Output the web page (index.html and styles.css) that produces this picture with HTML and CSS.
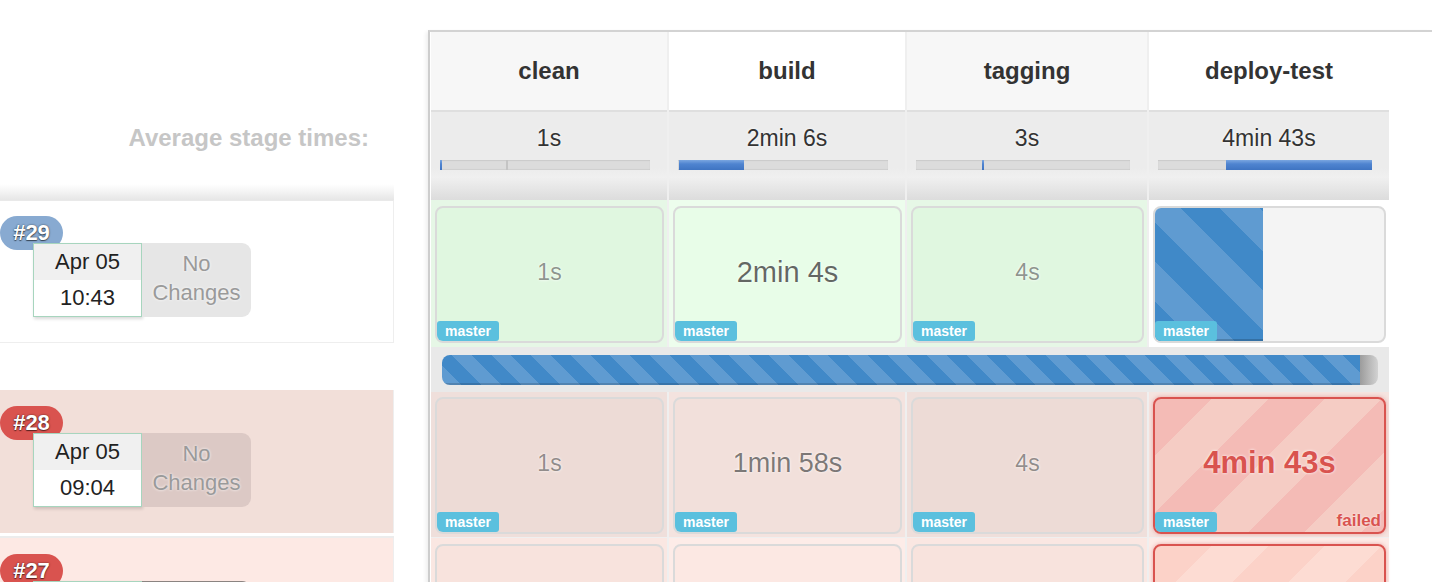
FILE: index.html
```html
<!DOCTYPE html>
<html lang="en">
<head>
<meta charset="utf-8">
<title>Stage View</title>
<link rel="stylesheet" href="styles.css">
</head>
<body>
<div class="page">
  <aside class="builds">
    <div class="builds-head"><span class="avg-label">Average stage times:</span></div>

    <div class="build-row row-29">
      <div class="build-badge badge-running">#29</div>
      <div class="build-meta">
        <div class="date-box"><div class="date">Apr 05</div><div class="time">10:43</div></div>
        <div class="changes">No<br>Changes</div>
      </div>
    </div>
    <div class="build-gap"></div>

    <div class="build-row row-28">
      <div class="build-badge badge-failed">#28</div>
      <div class="build-meta">
        <div class="date-box"><div class="date">Apr 05</div><div class="time">09:04</div></div>
        <div class="changes">No<br>Changes</div>
      </div>
    </div>
    <div class="build-gap small"></div>

    <div class="build-row row-27">
      <div class="build-badge badge-failed">#27</div>
      <div class="build-meta">
        <div class="date-box"><div class="date"></div><div class="time"></div></div>
        <div class="changes dark"></div>
      </div>
    </div>
  </aside>

  <main class="stages">
    <div class="stage-grid">
      <div class="head odd">clean</div>
      <div class="head">build</div>
      <div class="head odd">tagging</div>
      <div class="head">deploy-test</div>

      <div class="avg">
        <div class="avg-time">1s</div>
        <div class="track"><div class="fill" style="width:2px"></div><div class="tick" style="margin-left:64px"></div></div>
      </div>
      <div class="avg">
        <div class="avg-time">2min 6s</div>
        <div class="track"><div class="fill" style="margin-left:1px;width:65px"></div></div>
      </div>
      <div class="avg">
        <div class="avg-time">3s</div>
        <div class="track"><div class="fill" style="margin-left:66px;width:2px"></div></div>
      </div>
      <div class="avg">
        <div class="avg-time">4min 43s</div>
        <div class="track"><div class="fill" style="margin-left:68px;width:146px"></div></div>
      </div>

      <div class="cell r29 green-a"><div class="card"><span class="dur">1s</span><span class="branch">master</span></div></div>
      <div class="cell r29 green-b"><div class="card"><span class="dur big">2min 4s</span><span class="branch">master</span></div></div>
      <div class="cell r29 green-a"><div class="card"><span class="dur">4s</span><span class="branch">master</span></div></div>
      <div class="cell r29 white"><div class="card running"><div class="run-fill" style="width:108px"></div><span class="branch">master</span></div></div>

      <div class="progress-row">
        <div class="bar"><div class="bar-fill" style="width:918px"></div><div class="bar-rest"></div></div>
      </div>

      <div class="cell r28 red-a"><div class="card"><span class="dur">1s</span><span class="branch">master</span></div></div>
      <div class="cell r28 red-b"><div class="card"><span class="dur mid">1min 58s</span><span class="branch">master</span></div></div>
      <div class="cell r28 red-a"><div class="card"><span class="dur">4s</span><span class="branch">master</span></div></div>
      <div class="cell r28 red-d"><div class="card failed"><span class="dur fail">4min 43s</span><span class="branch">master</span><span class="failed-label">failed</span></div></div>

      <div class="cell r27 pink-a"><div class="card"></div></div>
      <div class="cell r27 pink-b"><div class="card"></div></div>
      <div class="cell r27 pink-a"><div class="card"></div></div>
      <div class="cell r27 pink-d"><div class="card failed light"></div></div>
    </div>
  </main>
</div>
</body>
</html>
```

FILE: styles.css
```css
* { box-sizing: border-box; margin: 0; padding: 0; }
html, body { background: #fff; }
body {
  font-family: "Liberation Sans", Arial, Helvetica, sans-serif;
  color: #333;
  width: 1432px;
  height: 582px;
  overflow: hidden;
}
.page { display: flex; align-items: flex-start; }

/* ---------- left: builds column ---------- */
.builds { width: 394px; flex: none; }
.builds-head {
  height: 200px;
  display: flex;
  justify-content: flex-end;
  align-items: flex-start;
  padding: 124px 25px 0 0;
  background: linear-gradient(to bottom, #fff 0, #fff 184px, #f3f3f3 192px, #e6e6e6 200px);
}
.avg-label {
  font-size: 24px;
  line-height: 28px;
  font-weight: bold;
  color: #c6c6c6;
}
.build-row {
  height: 143px;
  padding-top: 15px;
  border-right: 1px solid #eee;
}
.row-29 { background: #fff; border-top: 1px solid #e9e9e9; border-bottom: 1px solid #eee; }
.row-28 { background: #f2dfd9; padding-top: 16px; }
.row-27 { background: #fde9e4; padding-top: 16px; height: 120px; }
.build-gap { height: 47px; }
.build-gap.small { height: 5px; border-bottom: 2px solid #ececec; }

.build-badge {
  width: 63px;
  height: 34px;
  border-radius: 17px;
  color: #fff;
  font-size: 22px;
  font-weight: bold;
  line-height: 34px;
  text-align: center;
  text-shadow: 0 0 2px rgba(0,0,0,.6), 0 1px 1px rgba(0,0,0,.5);
}
.badge-running { background: #88aad1; }
.badge-failed { background: #d9534f; }

.build-meta {
  display: flex;
  margin: -7px 0 0 33px;
  position: relative;
}
.date-box {
  width: 109px;
  border: 1px solid #a7d5be;
  background: #fff;
  box-shadow: 1px 2px 3px rgba(0,0,0,.15);
  text-align: center;
  font-size: 22px;
  color: #222;
}
.date { height: 36px; line-height: 36px; background: #f0f0f0; }
.time { height: 36px; line-height: 36px; background: #fff; }
.changes {
  width: 109px;
  height: 74px;
  padding-top: 6px;
  border-radius: 0 9px 9px 0;
  background: #e6e6e6;
  color: #9a9a9a;
  font-size: 22px;
  line-height: 29px;
  text-align: center;
  text-shadow: 0 0 3px #fff;
}
.row-28 .changes { background: #dcc9c5; }
.changes.dark { background: #8b8481; }

/* ---------- right: stage grid ---------- */
.stages {
  flex: none;
  width: 1004px;
  height: 560px;
  margin: 30px 0 0 34px;
  border-top: 2px solid #d3d3d3;
  border-left: 2px solid #cdcdcd;
  box-shadow: -2px 2px 4px rgba(0,0,0,.07);
  overflow: hidden;
}
.stage-grid {
  display: grid;
  grid-template-columns: 236px 236px 240px 240px;
  column-gap: 2px;
  width: 958px;
  margin-left: 1px;
  background: #efefef;
}
.head {
  height: 78px;
  display: flex;
  align-items: center;
  justify-content: center;
  background: #fff;
  font-size: 24px;
  font-weight: bold;
  color: #333;
}
.head.odd { background: #f7f7f7; }

.avg {
  height: 90px;
  border-top: 2px solid #dfdfdf;
  background: linear-gradient(to bottom, #ececec 0, #ececec 64%, #f0f0f0 74%, #dcdcdc 100%);
}
.avg-time {
  margin-top: 12px;
  text-align: center;
  font-size: 23px;
  line-height: 28px;
  color: #333;
  text-shadow: 0 0 3px #fff;
}
.track {
  display: flex;
  height: 10px;
  margin: 8px 17px 0 9px;
  background: #dcdcdc;
  box-shadow: inset 0 1px 1px rgba(0,0,0,.08), inset 0 -1px 1px rgba(0,0,0,.06);
}
.fill {
  height: 100%;
  background: linear-gradient(to bottom, #7aa6e0 0, #4f84d0 40%, #3f74c2 100%);
}
.tick { width: 2px; height: 100%; background: #c4c4c4; }

.cell { padding: 5px 3px 3px 4px; }
.cell.r29 { padding-top: 6px; padding-bottom: 4px; }
.cell.r27 { margin-top: 1px; padding-top: 6px; }
.green-a { background: #e6f7e6; }
.green-a .card { background: #e0f7e0; }
.green-b { background: #edfded; }
.green-b .card { background: #e8fde8; }
.white { background: #fff; }
.red-a { background: #efdfdb; }
.red-a .card { background: #eddbd6; }
.red-b { background: #f4e3df; }
.red-b .card { background: #f2e0db; }
.red-d { background: #f5e4e0; }
.pink-a { background: #fae7e2; }
.pink-a .card { background: #f8e3dd; }
.pink-b { background: #fdece8; }
.pink-b .card { background: #fce8e3; }
.pink-d { background: #fdebe7; }

.card {
  position: relative;
  height: 137px;
  padding-bottom: 5px;
  display: flex;
  align-items: center;
  justify-content: center;
  border: 2px solid #dadada;
  border-radius: 8px;
  overflow: hidden;
}
.dur {
  font-size: 23px;
  color: rgba(0,0,0,.42);
  text-shadow: 0 0 3px #fff;
}
.dur.big { font-size: 29px; color: rgba(0,0,0,.6); }
.dur.mid { font-size: 27px; color: rgba(0,0,0,.52); }
.dur.fail { font-size: 31px; font-weight: bold; color: #d9534f; text-shadow: 0 0 3px #fff; }

.branch {
  position: absolute;
  left: 0;
  bottom: 0;
  padding: 0 8px;
  height: 20px;
  line-height: 20px;
  border-radius: 3px;
  background: #5bc0de;
  color: #fff;
  font-size: 14px;
  font-weight: bold;
}
.card.running {
  justify-content: flex-start;
  align-items: stretch;
  padding: 0;
  background: #f4f4f4;
}
.run-fill {
  height: 100%;
  background: repeating-linear-gradient(45deg, #4089c8 0, #4089c8 28px, #5f9bd1 28px, #5f9bd1 56px);
  box-shadow: inset 0 -2px 0 rgba(0,0,0,.18);
}
.card.failed {
  border-color: #d9534f;
  background: repeating-linear-gradient(135deg, #f4bbb6 0, #f4bbb6 40px, #f5ccc4 40px, #f5ccc4 80px);
  box-shadow: 0 0 4px rgba(217,83,79,.45);
}
.card.failed.light {
  background: repeating-linear-gradient(135deg, #fcd2c8 0, #fcd2c8 40px, #fddcd3 40px, #fddcd3 80px);
}
.failed-label {
  position: absolute;
  right: 3px;
  bottom: 1px;
  font-size: 17px;
  font-weight: bold;
  color: #d9534f;
  text-shadow: 0 0 2px #fff;
}

.progress-row {
  grid-column: 1 / -1;
  height: 45px;
  padding: 8px 11px 7px 11px;
  background: #e9e9e9;
}
.bar {
  display: flex;
  height: 30px;
  border-radius: 8px;
  overflow: hidden;
}
.bar-fill {
  height: 100%;
  background: repeating-linear-gradient(45deg, #5f9bd1 0, #5f9bd1 14px, #4189c8 14px, #4189c8 28px);
  box-shadow: inset 0 -2px 0 rgba(0,0,0,.15);
}
.bar-rest {
  flex: 1;
  background: linear-gradient(to right, #9c9c9c, #d2d2d2);
}
```
